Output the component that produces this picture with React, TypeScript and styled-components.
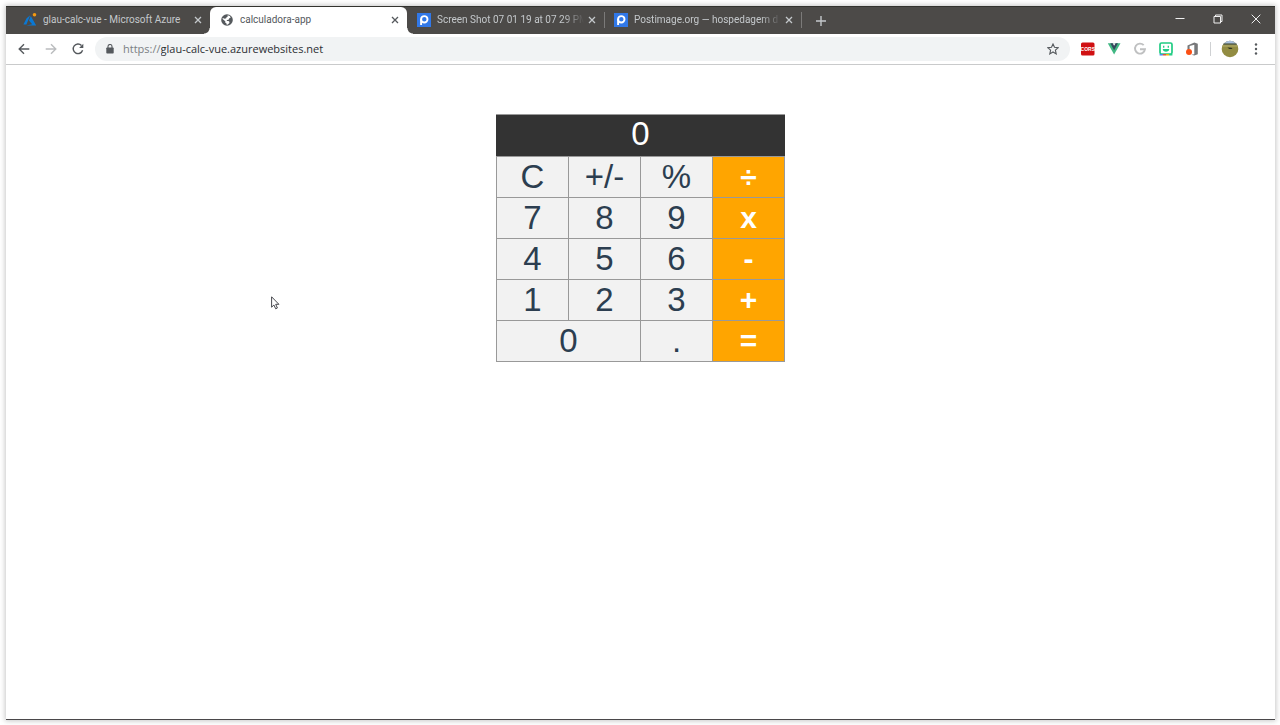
import React, { useState } from "react";
import styled, { createGlobalStyle } from "styled-components";

const GlobalStyle = createGlobalStyle`
  * { box-sizing: border-box; }
  body { margin: 0; background: #fff; font-family: "Open Sans", "Noto Sans", sans-serif; }
  button, input { font: inherit; color: inherit; margin: 0; padding: 0; border: 0; background: none; }
  svg { display: block; flex: none; }
`;

const Desktop = styled.div`
  display: flex;
  min-height: 100vh;
  padding: 6px 5px 5px 6px;
`;

const Window = styled.div`
  position: relative;
  flex: 1;
  min-width: 0;
  display: flex;
  flex-direction: column;
  background: #fff;
  border-top: 1px solid #33332f;
  border-bottom: 1px solid #4a484a;
  box-shadow: 0 0 5px 1px rgba(0, 0, 0, 0.22);
`;

const TabStrip = styled.header`
  display: flex;
  align-items: stretch;
  height: 27px;
  padding-left: 7px;
  background: #4c4a48;
  color: #c4c8cb;
`;

const TabList = styled.div`
  display: flex;
  min-width: 0;
`;

const Tab = styled.div<{ $active?: boolean; $divided?: boolean }>`
  position: relative;
  display: flex;
  align-items: center;
  gap: 2px;
  width: 197px;
  min-width: 0;
  padding: 0 6px 2px 10px;
  background: ${(p) => (p.$active ? "#fff" : "transparent")};
  color: ${(p) => (p.$active ? "#55595d" : "inherit")};
  border-radius: 6px 6px 0 0;

  &::after {
    content: "";
    position: absolute;
    right: -1px;
    width: 1px;
    height: 16px;
    background: ${(p) => (p.$divided ? "#7b7a79" : "transparent")};
  }
`;

const TabFoot = styled.span<{ $side: "left" | "right" }>`
  position: absolute;
  bottom: 0;
  ${(p) => p.$side}: -6px;
  width: 6px;
  height: 6px;
  background: radial-gradient(
    circle at ${(p) => p.$side} top,
    #4c4a48 5px,
    #fff 6px
  );
`;

const TabTitle = styled.button<{ $fade?: boolean }>`
  display: flex;
  align-items: center;
  gap: 6px;
  flex: 1;
  min-width: 0;
  font-family: Roboto, "Open Sans", sans-serif;
  font-size: 10px;
  line-height: 16px;
  text-align: left;
  white-space: nowrap;

  span {
    flex: 1;
    overflow: hidden;
    mask-image: ${(p) =>
      p.$fade ? "linear-gradient(to left, transparent, #000 20px)" : "none"};
  }
`;

const IconButton = styled.button<{ $size: number }>`
  display: flex;
  align-items: center;
  justify-content: center;
  flex: none;
  width: ${(p) => p.$size}px;
  height: ${(p) => p.$size}px;
`;

const NewTab = styled(IconButton)`
  align-self: center;
  margin-left: 9px;
`;

const WindowControls = styled.div`
  display: flex;
  margin-left: auto;
  color: #f0f0f0;
`;

const WindowButton = styled.button`
  display: flex;
  align-items: center;
  justify-content: center;
  width: 38px;
  height: 23px;
`;

const Toolbar = styled.nav`
  display: flex;
  align-items: center;
  height: 31px;
  padding: 0 8px 0 6px;
  border-bottom: 1px solid #c9cacb;
  color: #55595d;
`;

const NavButtons = styled.div`
  display: flex;
  gap: 3px;
  margin-right: 5px;
`;

const AddressBar = styled.label`
  display: flex;
  align-items: center;
  flex: 1;
  min-width: 0;
  height: 24px;
  padding: 0 2px 0 11px;
  border-radius: 12px;
  background: #f1f3f4;
  font-size: 11px;
  line-height: 16px;
  color: #7b7f83;

  svg:first-child { margin-right: 9px; }
`;

const AddressInput = styled.input`
  flex: 1;
  min-width: 0;
  color: #2c2f33;
  outline: none;
`;

const Extensions = styled.div`
  display: flex;
  align-items: center;
  gap: 4px;
  margin-left: 7px;
`;

const Divider = styled.span`
  width: 1px;
  height: 14px;
  margin: 0 4px 0 3px;
  background: #cfd1d3;
`;

const Page = styled.main`
  flex: 1;
  padding-top: 49px;
`;

const Calculator = styled.section`
  display: grid;
  grid-template-columns: repeat(4, 1fr);
  grid-template-rows: 41px;
  grid-auto-rows: 1fr;
  gap: 1px;
  width: 289px;
  height: 248px;
  margin: 0 auto;
  padding: 1px;
  background: #999;
  font: 33px/38px "Liberation Sans", Arial, sans-serif;
  color: #2c3e50;
`;

const Display = styled.output`
  grid-column: 1 / -1;
  margin: 0 -1px;
  background: #333;
  color: #fff;
  text-align: center;
`;

const Key = styled.button<{ $operator?: boolean; $wide?: boolean }>`
  grid-column: span ${(p) => (p.$wide ? 2 : 1)};
  min-width: 0;
  background: ${(p) => (p.$operator ? "orange" : "#f2f2f2")};
  color: ${(p) => (p.$operator ? "#fff" : "inherit")};
  font-weight: ${(p) => (p.$operator ? 700 : 400)};
  font-size: ${(p) => (p.$operator ? 30 : 33)}px;
`;

const Pointer = styled.svg`
  position: absolute;
  left: 265px;
  top: 289px;
`;

const CloseIcon = () => (
  <svg width="8" height="8" viewBox="0 0 8 8" stroke="currentColor" strokeWidth="1.3">
    <path d="M1 1l6 6M7 1L1 7" />
  </svg>
);

const AzureIcon = () => (
  <svg width="14" height="14" viewBox="0 0 14 14">
    <path fill="#0a78d4" d="M7.2 2.2L3.6 5.3.4 11.4h3zM7.8 3L6 7.6l3.2 3.7-6 1.1h10z" />
    <circle cx="11.500" cy="1.8" r="1.8" fill="#f59a10" />
  </svg>
);

const GlobeIcon = () => (
  <svg width="14" height="14" viewBox="0 0 14 14">
    <circle cx="7" cy="7" r="5.800" fill="#55595d" />
    <path fill="#fff" d="M7.600 2.300l2.200.7.900 1.500-1.600 1-.5 1.200-1.500.3-.5 1 1.900.1 1 1-.3 1.200-1.500 1.200-.9.600-.3-1.600-1.300-1.100.1-1.200-2.700-2.300.1-1 2.100.9 1.400-.5.100-.9 1.300-.6z" />
  </svg>
);

const PostimageIcon = () => (
  <svg width="14" height="14" viewBox="0 0 14 14">
    <path fill="#3178e8" d="M0 0h14v14H0z" />
    <circle cx="7.300" cy="6.300" r="3.200" fill="none" stroke="#fff" strokeWidth="1.900" />
    <path d="M4.100 5.800v6.200" stroke="#fff" strokeWidth="1.900" />
  </svg>
);

const BackIcon = ({ forward = false }: { forward?: boolean }) => (
  <svg width="12" height="12" viewBox="0 0 12 12" fill="none" stroke={forward ? "#babcbe" : "#55595d"} strokeWidth="1.4">
    <path d={forward ? "M.7 6h10M6 1.200L10.800 6 6 10.800" : "M11.300 6h-10M6 1.200L1.200 6 6 10.800"} />
  </svg>
);

const ReloadIcon = () => (
  <svg width="12" height="12" viewBox="0 0 12 12">
    <path fill="none" stroke="#55595d" strokeWidth="1.400" d="M9.500 2.500A4.800 4.800 0 1 0 10.600 7.300" />
    <path fill="#55595d" d="M11.300.8v4.200H7.100z" />
  </svg>
);

const LockIcon = () => (
  <svg width="8" height="10" viewBox="0 0 8 10">
    <rect x=".3" y="3.500" width="7.400" height="6" rx=".8" fill="#55595d" />
    <path d="M2 4V2.500a2 2 0 0 1 4 0V4" fill="none" stroke="#55595d" strokeWidth="1.100" />
  </svg>
);

const StarIcon = () => (
  <svg width="12" height="12" viewBox="0 0 12 12" fill="none" stroke="#55595d" strokeWidth="1.100">
    <path d="M6 1l1.500 3.300 3.700.4-2.800 2.500.8 3.700L6 9l-3.200 1.900.8-3.700L.8 4.700l3.700-.4z" />
  </svg>
);

const CorsIcon = () => (
  <svg width="14" height="14" viewBox="0 0 14 14">
    <rect y=".5" width="13.500" height="13" rx="1.500" fill="#d01012" />
    <text x="6.800" y="9" textAnchor="middle" fontFamily="Liberation Sans Narrow, Liberation Sans, sans-serif" fontSize="5" fontWeight="700" fill="#fff">CORS</text>
  </svg>
);

const VueIcon = () => (
  <svg width="14" height="14" viewBox="0 0 14 14">
    <path fill="#41b883" d="M.8 1.300h12.700L7.100 12.600z" />
    <path fill="#35495e" d="M3.300 1.300h7.700L7.100 8.200z" />
    <path fill="#fff" d="M5.700 1.300h2.900L7.100 3.800z" />
  </svg>
);

const GoogleIcon = () => (
  <svg width="14" height="14" viewBox="0 0 14 14" fill="none" stroke="#bfc0c1" strokeWidth="1.900">
    <path d="M10.700 3.200A5 5 0 1 0 12 7.200H7" />
  </svg>
);

const BitmojiIcon = () => (
  <svg width="14" height="14" viewBox="0 0 14 14">
    <rect x="1" y="1" width="12" height="11" rx="1.500" fill="#fff" stroke="#20cc83" strokeWidth="1.700" />
    <path d="M4.700 3.800v2M9.300 3.800v2" stroke="#20cc83" strokeWidth="1.300" />
    <path fill="#20cc83" d="M3.700 7h6.600c0 3.600-6.600 3.600-6.600 0z" />
    <path d="M.6 12.800h3.200" stroke="#4285f4" strokeWidth="1.400" />
    <path d="M3.800 12.800H7" stroke="#eb4236" strokeWidth="1.400" />
    <path d="M7 12.800h3.200" stroke="#f5b400" strokeWidth="1.400" />
    <path d="M10.200 12.800h3.200" stroke="#20cc83" strokeWidth="1.400" />
  </svg>
);

const OfficeIcon = () => (
  <svg width="14" height="14" viewBox="0 0 14 14">
    <path fill="#77787a" d="M2.500 3.500L9.300.5 12.800 1.800v10.400l-3.500 1.300-3-.8 3-.4V2.800L4.600 4v3.300l-2.100.8z" />
    <circle cx="4" cy="9.900" r="3" fill="#fb4f14" />
  </svg>
);

const AvatarIcon = () => (
  <svg width="18" height="18" viewBox="0 0 18 18">
    <clipPath id="avatar-round"><circle cx="9" cy="9" r="8.300" /></clipPath>
    <g clipPath="url(#avatar-round)">
      <path fill="#928c42" d="M0 0h18v18H0z" />
      <path fill="#a9bfdd" d="M0 0h18v3.700H0z" />
      <path fill="#3b4942" d="M0 3.500h18v1.200H0z" />
      <path fill="#a39d58" d="M0 4.700h18v2.400H0z" />
      <path fill="#2e3322" d="M6.500 7.400l4 .4 1 1.300H8.200z" />
    </g>
  </svg>
);

const MenuIcon = () => (
  <svg width="4" height="12" viewBox="0 0 4 12" fill="#55595d">
    <circle cx="2" cy="1.500" r="1.200" />
    <circle cx="2" cy="6" r="1.200" />
    <circle cx="2" cy="10.500" r="1.200" />
  </svg>
);

const tabs = [
  { title: "glau-calc-vue - Microsoft Azure", icon: <AzureIcon /> },
  { title: "calculadora-app", icon: <GlobeIcon />, active: true },
  { title: "Screen Shot 07 01 19 at 07 29 PM", icon: <PostimageIcon />, fade: true, divided: true },
  { title: "Postimage.org — hospedagem d", icon: <PostimageIcon />, fade: true, divided: true },
];

const extensions = [
  { name: "CORS", icon: <CorsIcon /> },
  { name: "Vue devtools", icon: <VueIcon /> },
  { name: "Google", icon: <GoogleIcon /> },
  { name: "Bitmoji", icon: <BitmojiIcon /> },
  { name: "Office", icon: <OfficeIcon /> },
];

const keys = ["C", "+/-", "%", "÷", "7", "8", "9", "x", "4", "5", "6", "-", "1", "2", "3", "+", "0", ".", "="];
const operators = ["÷", "x", "-", "+", "="];

export default function App() {
  const [url, setUrl] = useState("glau-calc-vue.azurewebsites.net");

  return (
    <>
      <GlobalStyle />
      <Desktop>
        <Window>
          <TabStrip>
            <TabList role="tablist">
              {tabs.map((tab) => (
                <Tab key={tab.title} $active={tab.active} $divided={tab.divided}>
                  {tab.active && <TabFoot $side="left" />}
                  {tab.active && <TabFoot $side="right" />}
                  <TabTitle role="tab" aria-selected={!!tab.active} $fade={tab.fade}>
                    {tab.icon}
                    <span>{tab.title}</span>
                  </TabTitle>
                  <IconButton $size={12} aria-label="Close tab"><CloseIcon /></IconButton>
                </Tab>
              ))}
            </TabList>
            <NewTab $size={22} aria-label="New tab">
              <svg width="10" height="10" viewBox="0 0 10 10" stroke="currentColor" strokeWidth="1.400">
                <path d="M5 0v10M0 5h10" />
              </svg>
            </NewTab>
            <WindowControls>
              <WindowButton aria-label="Minimize">
                <svg width="10" height="10" viewBox="0 0 10 10" stroke="currentColor"><path d="M.5 4.500h9" /></svg>
              </WindowButton>
              <WindowButton aria-label="Restore">
                <svg width="10" height="10" viewBox="0 0 10 10" fill="none" stroke="currentColor">
                  <path d="M1 2.500h6.500V9H1zM2.500 2.500V1H9v6.500H7.500" />
                </svg>
              </WindowButton>
              <WindowButton aria-label="Close window">
                <svg width="10" height="10" viewBox="0 0 10 10" stroke="currentColor"><path d="M.7.700l8.600 8.600M9.300.7L.7 9.300" /></svg>
              </WindowButton>
            </WindowControls>
          </TabStrip>
          <Toolbar>
            <NavButtons>
              <IconButton $size={24} aria-label="Back"><BackIcon /></IconButton>
              <IconButton $size={24} aria-label="Forward"><BackIcon forward /></IconButton>
              <IconButton $size={24} aria-label="Reload"><ReloadIcon /></IconButton>
            </NavButtons>
            <AddressBar>
              <LockIcon />
              <span>https://</span>
              <AddressInput aria-label="Address" value={url} onChange={(e) => setUrl(e.target.value)} />
              <IconButton $size={22} aria-label="Bookmark"><StarIcon /></IconButton>
            </AddressBar>
            <Extensions>
              {extensions.map((ext) => (
                <IconButton key={ext.name} $size={22} aria-label={ext.name}>{ext.icon}</IconButton>
              ))}
              <Divider />
              <IconButton $size={22} aria-label="Profile"><AvatarIcon /></IconButton>
              <IconButton $size={22} aria-label="Menu"><MenuIcon /></IconButton>
            </Extensions>
          </Toolbar>
          <Page>
            <Calculator aria-label="Calculator">
              <Display>0</Display>
              {keys.map((key) => (
                <Key key={key} $operator={operators.includes(key)} $wide={key === "0"}>{key}</Key>
              ))}
            </Calculator>
          </Page>
          <Pointer width="9" height="14" viewBox="0 0 9 14" aria-hidden="true">
            <path fill="#fff" stroke="#33343a" strokeWidth=".9" d="M.6.800v10.400l2.300-2.200 1.800 3.800 1.700-.8-1.700-3.700h3.200z" />
          </Pointer>
        </Window>
      </Desktop>
    </>
  );
}
